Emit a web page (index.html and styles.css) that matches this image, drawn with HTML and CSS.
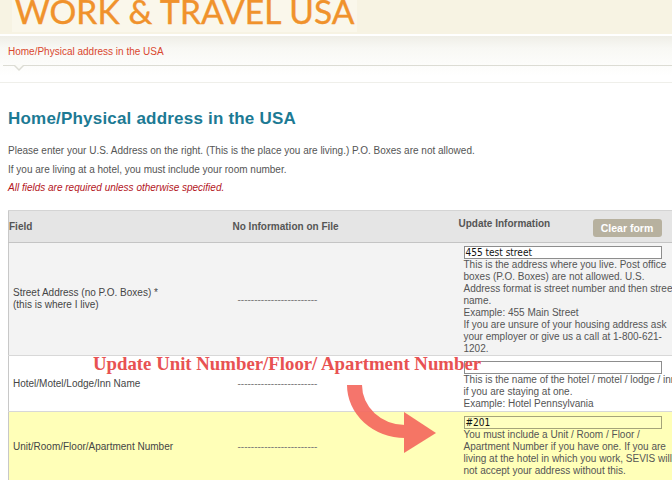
FILE: index.html
```html
<!DOCTYPE html>
<html>
<head>
<meta charset="utf-8">
<link rel="stylesheet" href="styles.css">
</head>
<body>
<div class="page">
  <header class="top">
    <div class="logo">WORK &amp; TRAVEL USA</div>
  </header>
  <div class="crumbband">
    <div class="crumb">Home/Physical address in the USA</div>
    <div class="notchline"><span class="notch"></span></div>
  </div>
  <div class="rule2"></div>

  <main class="content">
    <h1 class="title">Home/Physical address in the USA</h1>
    <p class="intro first">Please enter your U.S. Address on the right. (This is the place you are living.) P.O. Boxes are not allowed.</p>
    <p class="intro">If you are living at a hotel, you must include your room number.</p>
    <p class="req">All fields are required unless otherwise specified.</p>

    <table class="form">
      <colgroup>
        <col class="c1"><col class="c2"><col class="c3">
      </colgroup>
      <thead>
        <tr class="head">
          <th class="h1">Field</th>
          <th class="h2">No Information on File</th>
          <th class="h3"><div class="h3in"><span class="h3t">Update Information</span><button class="clear">Clear form</button></div></th>
        </tr>
      </thead>
      <tbody>
        <tr class="row gray r1">
          <td class="lbl">Street Address (no P.O. Boxes) *<br>(this is where I live)</td>
          <td class="dash">------------------------</td>
          <td class="upd">
            <div class="inp">455 test street</div>
            <div class="help">This is the address where you live. Post office<br>boxes (P.O. Boxes) are not allowed. U.S.<br>Address format is street number and then street<br>name.<br>Example: 455 Main Street<br>If you are unsure of your housing address ask<br>your employer or give us a call at 1-800-621-<br>1202.</div>
          </td>
        </tr>
        <tr class="row white r2">
          <td class="lbl">Hotel/Motel/Lodge/Inn Name</td>
          <td class="dash">------------------------</td>
          <td class="upd">
            <div class="inp"></div>
            <div class="help">This is the name of the hotel / motel / lodge / inn<br>if you are staying at one.<br>Example: Hotel Pennsylvania</div>
          </td>
        </tr>
        <tr class="row yellow r3">
          <td class="lbl">Unit/Room/Floor/Apartment Number</td>
          <td class="dash">------------------------</td>
          <td class="upd">
            <div class="inp yel">#201</div>
            <div class="help">You must include a Unit / Room / Floor /<br>Apartment Number if you have one. If you are<br>living at the hotel in which you work, SEVIS will<br>not accept your address without this.</div>
          </td>
        </tr>
      </tbody>
    </table>
  </main>

  <div class="callout">Update Unit Number/Floor/ Apartment Number</div>
  <svg class="arrow" width="672" height="480" viewBox="0 0 672 480">
    <g fill="#f5675d" opacity="0.9">
      <path d="M347 385 A58 53 0 0 0 405 438 L405 425 A43 40 0 0 1 362 385 Z"/>
      <polygon points="404,412 404,453 436,433"/>
    </g>
  </svg>
</div>
</body>
</html>
```

FILE: styles.css
```css
html, body {
  margin: 0;
  padding: 0;
  overflow: hidden;
  background: #ffffff;
}
.page {
  position: relative;
  width: 672px;
  height: 480px;
  overflow: hidden;
  font-family: "Liberation Sans", Arial, sans-serif;
}
.top {
  height: 34px;
  background: #f7f3e3;
  border-bottom: 2px solid #ffffff;
  display: flex;
  align-items: flex-start;
  overflow: hidden;
}
.logo {
  margin-left: 12px;
  margin-top: -9px;
  padding: 0 2px 0 3px;
  background: #faf7eb;
  font-family: Lato, "Open Sans", sans-serif;
  font-size: 33.5px;
  line-height: 40px;
  height: 41px;
  color: #f0922c;
  letter-spacing: 0.1px;
  white-space: nowrap;
  -webkit-text-stroke: 0.4px #f0922c;
}
.crumbband {
  height: 46px;
  background: linear-gradient(#efeee7 0px, #f8f8f4 12px, #ffffff 40px);
  display: flex;
  flex-direction: column;
}
.crumb {
  padding: 10px 0 0 8px;
  font-size: 10px;
  line-height: 12px;
  color: #d9472f;
  height: 14px;
}
.notchline {
  position: relative;
  margin-top: 5px;
  margin-left: 3px;
  height: 0;
  border-top: 1px solid #dcdcd4;
}
.notch {
  position: absolute;
  left: 10px;
  top: -1px;
  width: 0;
  height: 0;
  border-left: 6px solid transparent;
  border-right: 6px solid transparent;
  border-top: 6px solid #dcdcd4;
}
.notch::after {
  content: "";
  position: absolute;
  left: -5px;
  top: -7px;
  border-left: 5px solid transparent;
  border-right: 5px solid transparent;
  border-top: 5px solid #fbfbf8;
}
.rule2 {
  height: 0;
  border-top: 1px solid #efefea;
}
.content {
  padding: 0 0 0 8px;
}
.title {
  margin: 26px 0 0 0;
  font-size: 17px;
  line-height: 20px;
  font-weight: bold;
  color: #1c7a94;
  letter-spacing: 0.2px;
}
.intro {
  margin: 7px 0 0 0;
  font-size: 10px;
  line-height: 12px;
  color: #555555;
}
.intro.first {
  margin-top: 16px;
}
.req {
  margin: 6px 0 0 0;
  font-size: 10px;
  line-height: 12px;
  font-style: italic;
  color: #b3141c;
}
.form {
  margin-top: 16px;
  width: 720px;
  border-collapse: collapse;
  table-layout: fixed;
  border-left: 1px solid #c8c8c8;
  border-top: 1px solid #d4d4d4;
}
.c1 { width: 222px; }
.c2 { width: 228px; }
.c3 { width: 270px; }
.head {
  background: #e5e5e5;
  height: 32px;
  border-bottom: 1px solid #c4c4c4;
}
.head th {
  text-align: left;
  font-size: 10px;
  font-weight: bold;
  color: #555555;
  padding: 0;
  vertical-align: middle;
}
.head .h2 { padding-left: 2px; }
.head .h3 {
  vertical-align: top;
  padding-top: 7px;
}
.h3in {
  display: flex;
  align-items: flex-start;
}
.h3t {
  width: 134px;
  line-height: 12px;
}
.clear {
  margin-top: 1px;
  width: 69px;
  height: 18px;
  border: none;
  border-radius: 3px;
  background: #b7b19f;
  color: #ffffff;
  font-family: "Liberation Sans", Arial, sans-serif;
  font-weight: bold;
  font-size: 10.5px;
  padding: 0;
}
.row td {
  font-size: 10px;
  color: #454545;
  padding: 0;
  vertical-align: middle;
}
.row {
  border-bottom: 1px solid #d8d8d8;
}
.gray { background: #f3f3f3; }
.white { background: #ffffff; }
.yellow { background: #ffffb8; }
.row .lbl {
  padding-left: 4px;
  line-height: 12px;
}
.row .dash {
  padding-left: 7px;
  color: #7a7a7a;
  font-size: 10px;
}
.row .upd {
  padding: 3px 0 0 5px;
  vertical-align: top;
}
.inp {
  box-sizing: border-box;
  width: 198px;
  height: 13px;
  border: 1px solid #8d8d8d;
  background: #ffffff;
  font-family: "DejaVu Sans Condensed", "DejaVu Sans", sans-serif;
  font-size: 10px;
  line-height: 11px;
  padding-left: 1px;
  color: #111111;
}
.inp.yel {
  background: #ffffc0;
  border-color: #a5a37a;
}
.help {
  white-space: nowrap;
  font-size: 10px;
  line-height: 12px;
  color: #555555;
}
.r1 { height: 112px; }
.r2 { height: 56px; }
.r3 { height: 70px; }
.row.r2 .upd { padding-top: 5px; }
.row.r3 .upd { padding-top: 4px; }
.callout {
  position: absolute;
  left: 93px;
  top: 354px;
  font-family: "Liberation Serif", "Times New Roman", serif;
  font-weight: bold;
  font-size: 18.8px;
  line-height: 20px;
  color: #e85252;
  white-space: nowrap;
}
.arrow {
  position: absolute;
  left: 0;
  top: 0;
  pointer-events: none;
}
```
